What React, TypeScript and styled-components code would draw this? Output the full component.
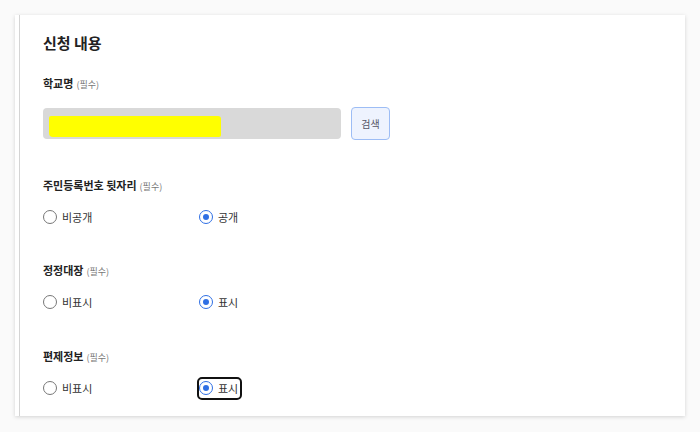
import React from 'react';
import styled, { createGlobalStyle } from 'styled-components';

const GlobalStyle = createGlobalStyle`
  body {
    margin: 0;
    background: #fafafa;
    font-family: 'Noto Sans CJK KR', 'Noto Sans', sans-serif;
  }
`;

const Page = styled.div`
  width: 700px;
  height: 432px;
  padding: 15px 15px 0 15px;
  box-sizing: border-box;
`;

const Card = styled.div`
  height: 401px;
  background: #ffffff;
  box-shadow: 0 1px 4px rgba(0, 0, 0, 0.16);
  padding-left: 4px;
  box-sizing: border-box;
`;

const Inner = styled.div`
  height: 100%;
  border-left: 1px solid #d4d4d4;
  padding: 18px 0 0 23px;
  box-sizing: border-box;
`;

const Title = styled.h2`
  margin: 0 0 22px;
  font-size: 15px;
  line-height: 20px;
  font-weight: 700;
  color: #222;
`;

const Label = styled.div<{ $gap?: number }>`
  display: flex;
  align-items: baseline;
  height: 16px;
  margin-top: ${(p) => p.$gap ?? 0}px;
  font-size: 11px;
  line-height: 16px;
  font-weight: 700;
  color: #222;
`;

const Required = styled.span`
  margin-left: 3px;
  font-size: 9px;
  line-height: 16px;
  font-weight: 400;
  color: #777;
`;

const SearchRow = styled.div`
  display: flex;
  align-items: center;
  gap: 10px;
  margin-top: 16px;
`;

const Input = styled.div`
  position: relative;
  width: 298px;
  height: 31px;
  background: #d9d9d9;
  border-radius: 4px;
`;

const Highlight = styled.div`
  position: absolute;
  left: 6px;
  top: 8px;
  width: 172px;
  height: 21px;
  background: #ffff00;
  border-radius: 2px 3px 2px 4px;
`;

const SearchButton = styled.button`
  width: 39px;
  height: 33px;
  padding: 0;
  border: 1px solid #9dbdf5;
  border-radius: 4px;
  background: #eef3fe;
  font-family: inherit;
  font-size: 10px;
  color: #556;
`;

const RadioRow = styled.div`
  display: grid;
  grid-template-columns: 156px auto;
  justify-content: start;
  margin-top: 13px;
  height: 22px;
  align-items: center;
`;

const Option = styled.label<{ $focus?: boolean }>`
  display: inline-flex;
  align-items: center;
  gap: 5px;
  height: 19px;
  line-height: 19px;
  justify-self: start;
  font-size: 11px;
  color: #333;
  border-radius: 3px;
  outline: ${(p) => (p.$focus ? '2px solid #111' : 'none')};
  outline-offset: 0;
  padding-right: 2px;
`;

const Circle = styled.span<{ $checked?: boolean }>`
  width: 14px;
  height: 14px;
  box-sizing: border-box;
  border-radius: 50%;
  border: 1px solid ${(p) => (p.$checked ? '#2f6fe4' : '#777')};
  display: inline-flex;
  align-items: center;
  justify-content: center;
  background: #fff;

  &::after {
    content: '';
    display: ${(p) => (p.$checked ? 'block' : 'none')};
    width: 6px;
    height: 6px;
    border-radius: 50%;
    background: #2f6fe4;
  }
`;

type Field = { label: string; off: string; on: string; gap: number; focus?: boolean };

const fields: Field[] = [
  { label: '주민등록번호 뒷자리', off: '비공개', on: '공개', gap: 37 },
  { label: '정정대장', off: '비표시', on: '표시', gap: 34 },
  { label: '편제정보', off: '비표시', on: '표시', gap: 35, focus: true },
];

export default function App() {
  return (
    <Page>
      <GlobalStyle />
      <Card>
        <Inner>
          <Title>신청 내용</Title>
          <Label>
            학교명<Required>(필수)</Required>
          </Label>
          <SearchRow>
            <Input>
              <Highlight />
            </Input>
            <SearchButton>검색</SearchButton>
          </SearchRow>
          {fields.map((f) => (
            <React.Fragment key={f.label}>
              <Label $gap={f.gap}>
                {f.label}
                <Required>(필수)</Required>
              </Label>
              <RadioRow>
                <Option>
                  <Circle />
                  {f.off}
                </Option>
                <Option $focus={f.focus}>
                  <Circle $checked />
                  {f.on}
                </Option>
              </RadioRow>
            </React.Fragment>
          ))}
        </Inner>
      </Card>
    </Page>
  );
}
